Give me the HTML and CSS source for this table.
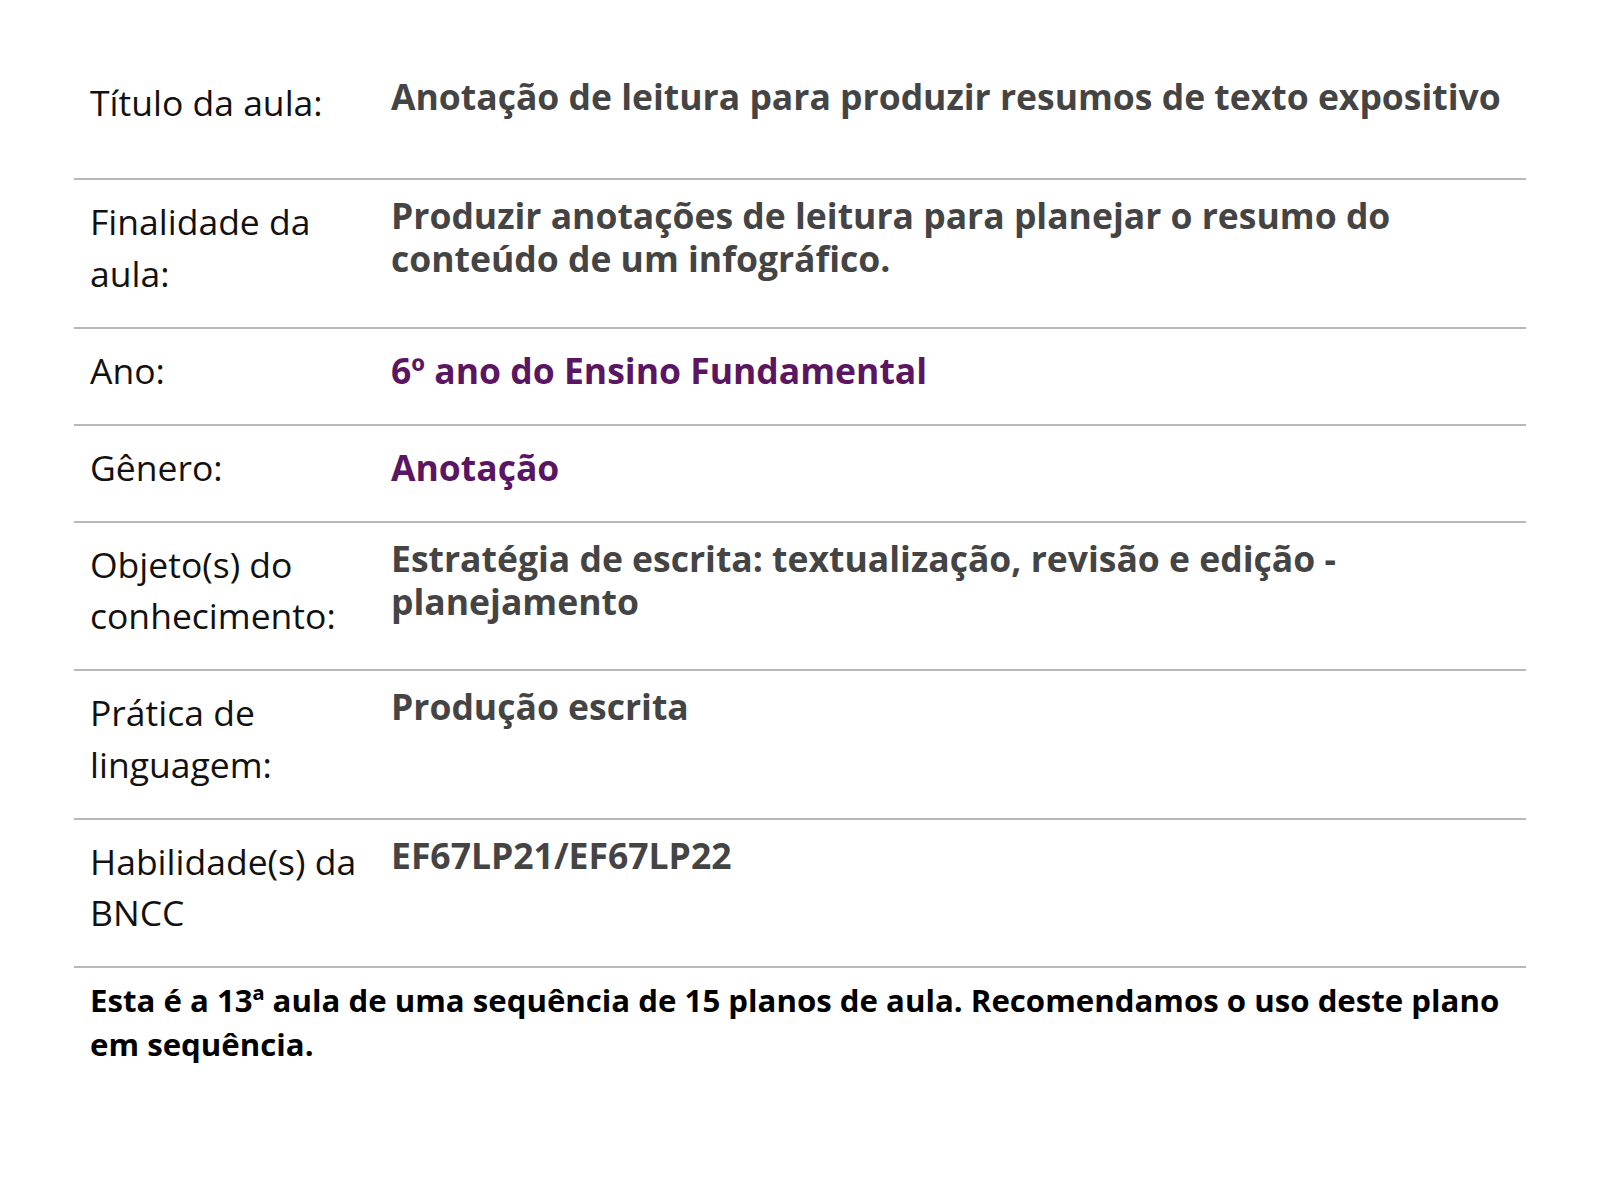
FILE: index.html
```html
<!DOCTYPE html>
<html lang="pt-BR">
<head>
<meta charset="utf-8">
<title>Plano de aula</title>
<link rel="stylesheet" href="styles.css">
</head>
<body>
<main class="plan">
  <div class="row row-first">
    <div class="label">Título da aula:</div>
    <div class="value">Anotação de leitura para produzir resumos de texto expositivo</div>
  </div>
  <div class="row">
    <div class="label">Finalidade da aula:</div>
    <div class="value">Produzir anotações de leitura para planejar o resumo do conteúdo de um infográfico.</div>
  </div>
  <div class="row">
    <div class="label">Ano:</div>
    <div class="value value-accent">6º ano do Ensino Fundamental</div>
  </div>
  <div class="row">
    <div class="label">Gênero:</div>
    <div class="value value-accent">Anotação</div>
  </div>
  <div class="row">
    <div class="label">Objeto(s) do conhecimento:</div>
    <div class="value">Estratégia de escrita: textualização, revisão e edição - planejamento</div>
  </div>
  <div class="row">
    <div class="label">Prática de linguagem:</div>
    <div class="value">Produção escrita</div>
  </div>
  <div class="row">
    <div class="label">Habilidade(s) da BNCC</div>
    <div class="value">EF67LP21/EF67LP22</div>
  </div>
  <p class="note">Esta é a 13ª aula de uma sequência de 15 planos de aula. Recomendamos o uso deste plano em sequência.</p>
</main>
</body>
</html>
```

FILE: styles.css
```css
* { box-sizing: border-box; }
html, body { margin: 0; padding: 0; background: #fff; }
body { font-family: "Open Sans", "Liberation Sans", sans-serif; }
.plan {
  width: 1452px;
  margin: 0 auto;
  padding-top: 61px;
}
.row {
  display: grid;
  grid-template-columns: 301px 1fr;
  padding: 16px 0 27.5px 16px;
  border-bottom: 2px solid #b8b8b8;
}
.row-first { padding-top: 16px; padding-bottom: 49.5px; }
.label {
  font-size: 35.5px;
  line-height: 51.5px;
  color: #111;
  padding-right: 18px;
}
.value {
  font-size: 35.5px;
  line-height: 43px;
  margin-top: -2px;
  font-weight: 700;
  color: #444;
  padding-right: 8px;
}
.value-accent {
  color: #5a1662;
  line-height: 51.5px;
  margin-top: 0;
}
.note {
  margin: 0;
  padding: 10px 0 10px 16px;
  font-size: 31.2px;
  line-height: 44px;
  font-weight: 700;
  color: #000;
}
```
